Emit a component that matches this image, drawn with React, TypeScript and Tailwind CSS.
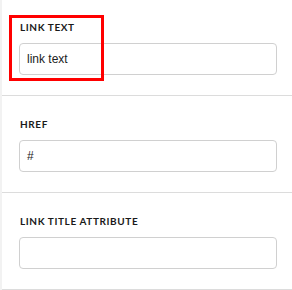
import React from "react";

function Field({ label, value, first }: { label: string; value: string; first?: boolean }) {
  return (
    <div
      className={`${first ? "pt-[21px]" : "pt-[22px]"} pb-[20px] pl-[19px] pr-[15px] border-b border-[#dcdcdc]`}
    >
      <div className="pl-px text-[10px] leading-[12px] font-bold tracking-[0.06em] text-[#1a1a1a] font-['Lato',sans-serif]">
        {label}
      </div>
      <div className="mt-[10px] h-[32px] w-full rounded-[4px] border border-[#d0d0d0] bg-white flex items-center px-[7px] text-[12px] text-[#222] font-['Liberation_Sans',Arial,sans-serif]">
        {value}
      </div>
    </div>
  );
}

export default function App() {
  return (
    <div className="relative w-[292px] h-[290px] bg-white overflow-hidden border-l-2 border-[#f2f2f2]">
      <div className="-ml-[2px]">
        <Field label="LINK TEXT" value="link text" first />
        <Field label="HREF" value="#" />
        <Field label="LINK TITLE ATTRIBUTE" value="" />
      </div>
      <div className="absolute left-[7px] top-[15px] w-[95px] h-[66px] border-[3px] border-[#ff0000]" />
    </div>
  );
}
